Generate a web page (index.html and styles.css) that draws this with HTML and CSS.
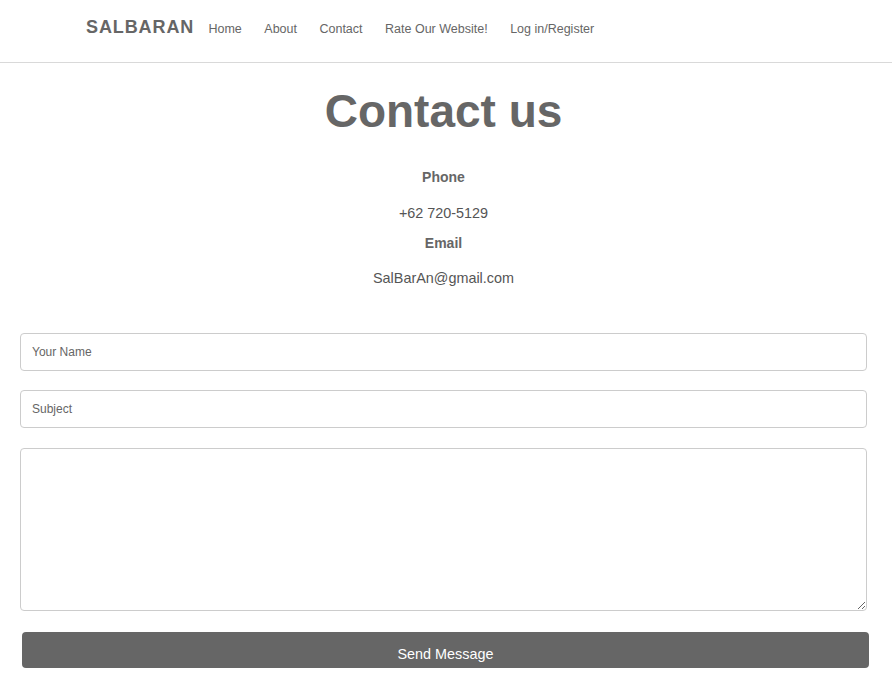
FILE: index.html
```html
<!DOCTYPE html>
<html lang="en">
<head>
<meta charset="utf-8">
<title>Contact us - SALBARAN</title>
<link rel="stylesheet" href="styles.css">
</head>
<body>
<header class="site-header">
  <a class="logo" href="#">SALBARAN</a>
  <nav class="nav">
    <a href="#">Home</a>
    <a href="#">About</a>
    <a href="#">Contact</a>
    <a href="#">Rate Our Website!</a>
    <a href="#">Log in/Register</a>
  </nav>
</header>
<main class="container">
  <h1 class="title">Contact us</h1>
  <h3 class="info-label first">Phone</h3>
  <p class="info-value">+62 720-5129</p>
  <h3 class="info-label">Email</h3>
  <p class="info-value email">SalBarAn@gmail.com</p>
  <form class="contact-form">
    <input class="field" type="text" placeholder="Your Name">
    <input class="field" type="text" placeholder="Subject">
    <textarea class="field message"></textarea>
    <button class="send" type="button">Send Message</button>
  </form>
</main>
</body>
</html>
```
FILE: styles.css
```css
* { box-sizing: border-box; }
html, body { margin: 0; padding: 0; background: #fff; }
body {
  font-family: "Liberation Sans", Arial, sans-serif;
  color: #666;
}
.site-header {
  display: flex;
  align-items: baseline;
  height: 63px;
  padding: 17px 0 0 86px;
  border-bottom: 1px solid #d9d9d9;
}
.logo {
  font-size: 18px;
  line-height: 21px;
  font-weight: bold;
  letter-spacing: 0.9px;
  color: #666;
  text-decoration: none;
  margin-right: 3px;
}
.nav { display: flex; align-items: baseline; }
.nav a {
  font-size: 12.5px;
  color: #666;
  text-decoration: none;
  padding: 0 11.25px;
}
.container {
  width: 847px;
  margin-left: 20px;
  text-align: center;
}
.title {
  margin: 22px 0 0;
  font-size: 46px;
  line-height: 52px;
  font-weight: bold;
  color: #666;
}
.info-label {
  margin: 13px 0 0;
  font-size: 14px;
  line-height: 16px;
  font-weight: bold;
  color: #666;
}
.info-label.first { margin-top: 32px; }
.info-value {
  margin: 20px 0 0;
  font-size: 14.4px;
  line-height: 17px;
  color: #555;
}
.info-value.email { margin-top: 19px; }
.contact-form {
  margin-top: 46px;
  display: flex;
  flex-direction: column;
  text-align: left;
}
.field {
  display: block;
  width: 847px;
  height: 38px;
  margin: 0 0 19px;
  padding: 0 11px;
  border: 1px solid #ccc;
  border-radius: 4px;
  font-family: "Liberation Sans", Arial, sans-serif;
  font-size: 12px;
  color: #555;
  background: #fff;
}
.field + .field { margin-bottom: 20px; }
.field.message {
  height: 163px;
  margin-bottom: 21px;
  padding: 8px 11px;
}
.field::placeholder { color: #666; }
.send {
  width: 847px;
  height: 36px;
  margin-left: 2px;
  padding: 14px 0 5px;
  border: none;
  border-radius: 4px;
  background: #666;
  color: #fff;
  font-family: "Liberation Sans", Arial, sans-serif;
  font-size: 14.4px;
  line-height: 17px;
  text-align: center;
}
```
